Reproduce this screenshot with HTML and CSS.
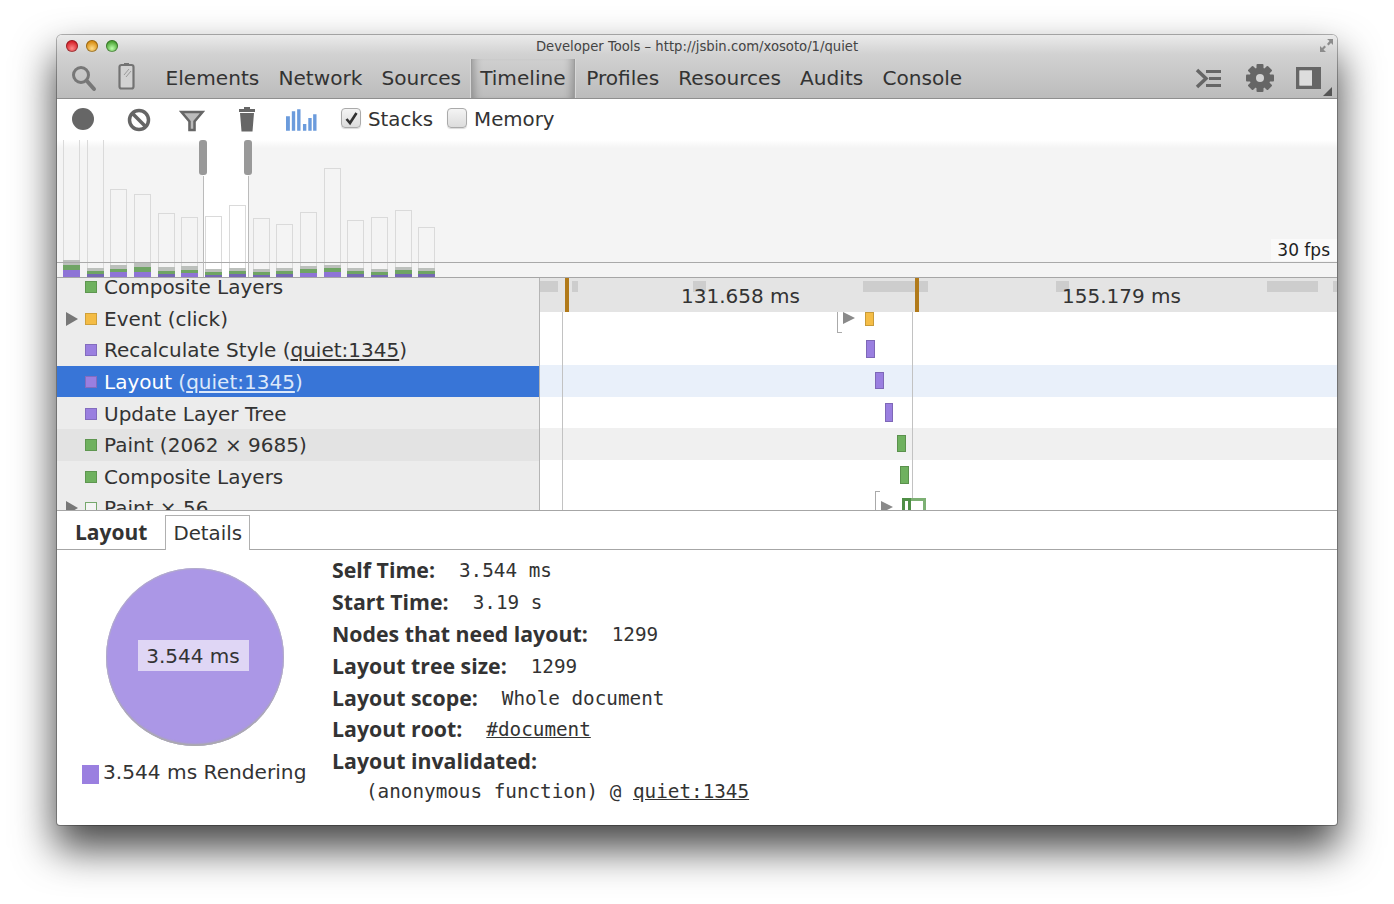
FILE: index.html
```html
<!DOCTYPE html>
<html lang="en">
<head>
<meta charset="utf-8">
<title>Developer Tools</title>
<link rel="stylesheet" href="styles.css">
</head>
<body>
<div class="window">
  <header class="chrome">
    <div class="titlebar">
      <div class="lights"><i class="light red"></i><i class="light yellow"></i><i class="light green"></i></div>
      <div class="title">Developer Tools – http://jsbin.com/xosoto/1/quiet</div>
      <svg class="expand" width="15" height="15" viewBox="0 0 15 15"><path d="M8 1h6v6l-2-2-2.500 2.500-1.500-1.500L10.500 3zM7 14H1V8l2 2 2.500-2.500L7 9l-2.500 2.500z" fill="#8c8c8c"/></svg>
    </div>
    <div class="tabbar">
      <svg class="ic-search" width="26" height="28" viewBox="0 0 26 28"><circle cx="10" cy="11" r="7.500" fill="none" stroke="#777" stroke-width="3"/><path d="M15.500 16.500L23 25" stroke="#777" stroke-width="4" stroke-linecap="round"/></svg>
      <svg class="ic-device" width="17" height="27" viewBox="0 0 17 27"><rect x="1.500" y="2" width="14" height="23.500" rx="2" fill="#d2d2d2" stroke="#737373" stroke-width="2.200"/><path d="M6 1h5" stroke="#737373" stroke-width="2"/><path d="M6 12l5-6M8 14l5-6" stroke="#9a9a9a" stroke-width="1"/></svg>
      <nav class="nav">
        <span class="nav-item">Elements</span>
        <span class="nav-item">Network</span>
        <span class="nav-item">Sources</span>
        <span class="nav-item nav-active">Timeline</span>
        <span class="nav-item">Profiles</span>
        <span class="nav-item">Resources</span>
        <span class="nav-item">Audits</span>
        <span class="nav-item">Console</span>
      </nav>
      <div class="tools">
        <svg width="27" height="21" viewBox="0 0 27 21"><path d="M2 2l9 8.500-9 8.500" fill="none" stroke="#666" stroke-width="3.500"/><path d="M11 3.500h15M14 10.500h12M11 17.500h15" stroke="#666" stroke-width="3"/></svg>
        <svg width="28" height="28" viewBox="0 0 28 28">
          <g fill="#666">
            <circle cx="14" cy="14" r="10.500"/>
            <rect x="10.500" y="0" width="7" height="28" rx="1"/>
            <rect x="10.500" y="0" width="7" height="28" rx="1" transform="rotate(45 14 14)"/>
            <rect x="10.500" y="0" width="7" height="28" rx="1" transform="rotate(90 14 14)"/>
            <rect x="10.500" y="0" width="7" height="28" rx="1" transform="rotate(135 14 14)"/>
          </g>
          <circle cx="14" cy="14" r="4" fill="#d2d2d2"/>
        </svg>
        <svg class="ic-dock" width="25" height="22" viewBox="0 0 25 22"><path fill="#666" fill-rule="evenodd" d="M0 0h25v22H0zM3.500 3.500v15H16v-15z"/><path fill="#ddd" d="M3.500 3.500H16v15H3.500z"/></svg>
      </div>
      <i class="corner"></i>
    </div>
  </header>

  <div class="toolbar">
    <svg class="tb-record" width="22" height="22" viewBox="0 0 22 22"><circle cx="11" cy="11" r="11" fill="#666"/></svg>
    <svg class="tb-clear" width="24" height="24" viewBox="0 0 24 24"><circle cx="12" cy="12" r="9.500" fill="none" stroke="#666" stroke-width="3.500"/><path d="M5.500 5.500l13 13" stroke="#666" stroke-width="3.500"/></svg>
    <svg class="tb-filter" width="26" height="22" viewBox="0 0 26 22"><path d="M1 1h24l-8.500 10v10h-7V11z" fill="#bbb"/><path d="M2.500 2h21l-8 9.500v8.500h-5v-8.500z" fill="none" stroke="#666" stroke-width="2.500"/></svg>
    <svg class="tb-trash" width="16" height="25" viewBox="0 0 16 25"><path fill="#666" d="M5 0h6v2h5v3H0V2h5zM1 6h14l-1.500 18.500h-11z"/></svg>
    <svg class="tb-bars" width="31" height="23" viewBox="0 0 32 23"><path fill="#6b9bdc" d="M0 7h4v15H0zM6 2h3.500v20H6zM11.500 0H15v22h-3.500zM17.500 15H21v7h-3.500zM23 9h3.500v13H23zM28 5h3.500v17H28z"/></svg>
    <label class="check"><span class="box"><svg width="15" height="15" viewBox="0 0 15 15"><path d="M2.500 8l3.500 4 6.500-10" fill="none" stroke="#333" stroke-width="2.600"/></svg></span>Stacks</label>
    <label class="check"><span class="box"></span>Memory</label>
  </div>

  <section class="overview">
    <div class="ov-selection"></div>
    <div class="ov-bars">
      <div class="ov-bar ov-open" style="height:137px"><i class="sa" style="height:5px"></i><i class="sg" style="height:5px"></i><i class="sv sv-strong" style="height:7px"></i></div>
      <div class="ov-bar ov-open" style="height:137px"><i class="sa" style="height:3px"></i><i class="sg" style="height:3px"></i><i class="sv" style="height:3px"></i></div>
      <div class="ov-bar" style="height:88px"><i class="sa" style="height:4px"></i><i class="sg" style="height:3px"></i><i class="sv sv-strong" style="height:5px"></i></div>
      <div class="ov-bar" style="height:83px"><i class="sa" style="height:5px"></i><i class="sg" style="height:5px"></i><i class="sv sv-strong" style="height:5px"></i></div>
      <div class="ov-bar" style="height:64px"><i class="sa" style="height:4px"></i><i class="sg" style="height:3px"></i><i class="sv" style="height:3px"></i></div>
      <div class="ov-bar" style="height:60px"><i class="sa" style="height:4px"></i><i class="sg" style="height:3px"></i><i class="sv sv-strong" style="height:4px"></i></div>
      <div class="ov-bar" style="height:61px"><i class="sa" style="height:3px"></i><i class="sg" style="height:3px"></i><i class="sv" style="height:2px"></i></div>
      <div class="ov-bar" style="height:72px"><i class="sa" style="height:3px"></i><i class="sg" style="height:3px"></i><i class="sv" style="height:3px"></i></div>
      <div class="ov-bar" style="height:59px"><i class="sa" style="height:3px"></i><i class="sg" style="height:3px"></i><i class="sv" style="height:2px"></i></div>
      <div class="ov-bar" style="height:53px"><i class="sa" style="height:3px"></i><i class="sg" style="height:3px"></i><i class="sv" style="height:3px"></i></div>
      <div class="ov-bar" style="height:65px"><i class="sa" style="height:3px"></i><i class="sg" style="height:4px"></i><i class="sv sv-strong" style="height:4px"></i></div>
      <div class="ov-bar" style="height:109px"><i class="sa" style="height:3px"></i><i class="sg" style="height:4px"></i><i class="sv sv-strong" style="height:5px"></i></div>
      <div class="ov-bar" style="height:57px"><i class="sa" style="height:3px"></i><i class="sg" style="height:3px"></i><i class="sv" style="height:3px"></i></div>
      <div class="ov-bar" style="height:60px"><i class="sa" style="height:3px"></i><i class="sg" style="height:3px"></i><i class="sv" style="height:2px"></i></div>
      <div class="ov-bar" style="height:67px"><i class="sa" style="height:3px"></i><i class="sg" style="height:4px"></i><i class="sv" style="height:3px"></i></div>
      <div class="ov-bar" style="height:50px"><i class="sa" style="height:3px"></i><i class="sg" style="height:3px"></i><i class="sv" style="height:3px"></i></div>
    </div>
    <i class="ov-rule"></i>
    <i class="ov-handle ov-handle-l"></i>
    <i class="ov-handle ov-handle-r"></i>
    <i class="ov-line ov-line-l"></i>
    <i class="ov-line ov-line-r"></i>
    <span class="fps">30 fps</span>
  </section>

  <section class="main">
    <div class="list">
      <div class="list-inner">
        <div class="row"><i class="sw green"></i>Composite Layers</div>
        <div class="row"><i class="tri"></i><i class="sw yellow"></i>Event (click)</div>
        <div class="row"><i class="sw purple"></i>Recalculate Style (<u>quiet:1345</u>)</div>
        <div class="row selected"><i class="sw purple"></i>Layout <span class="link">(<u>quiet:1345</u>)</span></div>
        <div class="row"><i class="sw purple"></i>Update Layer Tree</div>
        <div class="row alt"><i class="sw green"></i>Paint (2062 × 9685)</div>
        <div class="row"><i class="sw green"></i>Composite Layers</div>
        <div class="row"><i class="tri"></i><i class="sw hollow"></i>Paint × 56</div>
      </div>
    </div>
    <div class="chart">
      <div class="ruler">
        <i class="rb" style="left:0;width:18px"></i>
        <i class="rb" style="left:32px;width:6px"></i>
        <i class="rb" style="left:153px;width:13px"></i>
        <i class="rb" style="left:323px;width:65px"></i>
        <i class="rb" style="left:516px;width:13px"></i>
        <i class="rb" style="left:727px;width:51px"></i>
        <i class="rb" style="left:793px;width:4px"></i>
        <i class="marker" style="left:25px"></i>
        <i class="marker" style="left:375px"></i>
        <span class="time" style="left:141px">131.658 ms</span>
        <span class="time" style="left:522px">155.179 ms</span>
      </div>
      <div class="tracks">
        <div class="track track-first"></div>
        <div class="track"></div>
        <div class="track track-sel"></div>
        <div class="track"></div>
        <div class="track track-alt"></div>
        <div class="track"></div>
        <div class="track"></div>
        <i class="grid" style="left:22px"></i>
        <i class="grid" style="left:372px"></i>
        <i class="bar yellow-b" style="left:325px;top:0;height:14px"></i>
        <i class="bar purple-b" style="left:326px;top:28px;height:18px"></i>
        <i class="bar purple-b" style="left:335px;top:60px;height:17px"></i>
        <i class="bar purple-b" style="left:345px;top:91px;height:19px;width:8px"></i>
        <i class="bar green-b" style="left:357px;top:123px;height:17px"></i>
        <i class="bar green-b" style="left:360px;top:154px;height:18px"></i>
        <i class="bar hollow-b" style="left:362px;top:186px;height:20px;width:24px"></i>
        <i class="bar hollow-b2" style="left:362px;top:186px;height:20px;width:9px"></i>
        <i class="play" style="left:303px;top:0"></i>
        <i class="play" style="left:341px;top:189px"></i>
        <i class="bracket" style="left:297px;top:0;height:21px"></i>
        <i class="bracket bracket-top" style="left:335px;top:179px;height:20px"></i>
      </div>
    </div>
  </section>

  <div class="tabs">
    <span class="tab tab-on">Layout</span>
    <span class="tab tab-box">Details</span>
  </div>

  <section class="details">
    <div class="pie-col">
      <div class="pie"><span class="pie-label">3.544 ms</span></div>
      <div class="legend"><i class="legend-sw"></i>3.544 ms Rendering</div>
    </div>
    <div class="info">
      <div class="info-row"><b>Self Time:</b><span class="val">3.544 ms</span></div>
      <div class="info-row"><b>Start Time:</b><span class="val">3.19 s</span></div>
      <div class="info-row"><b>Nodes that need layout:</b><span class="val">1299</span></div>
      <div class="info-row"><b>Layout tree size:</b><span class="val">1299</span></div>
      <div class="info-row"><b>Layout scope:</b><span class="val">Whole document</span></div>
      <div class="info-row"><b>Layout root:</b><span class="val"><u>#document</u></span></div>
      <div class="info-row"><b>Layout invalidated:</b></div>
      <div class="info-stack">(anonymous function) @ <u>quiet:1345</u></div>
    </div>
  </section>
</div>
</body>
</html>
```
FILE: styles.css
```css
html, body { margin: 0; padding: 0; background: #fff; }
body { height: 904px; overflow: hidden; font-family: "DejaVu Sans", sans-serif; color: #333; }
i { display: block; }

.window {
  width: 1280px;
  height: 790px;
  margin: 35px 0 0 57px;
  background: #fff;
  border-radius: 5px 5px 3px 3px;
  box-shadow: 0 22px 40px 2px rgba(0,0,0,.72), 0 0 0 1px rgba(0,0,0,.28);
  display: flex;
  flex-direction: column;
  overflow: hidden;
}

.chrome { height: 64px; background: linear-gradient(#ebebeb, #d2d2d2 30%, #bcbcbc); border-bottom: 1px solid #8f8f8f; flex: none; box-sizing: border-box; }
.titlebar { height: 24px; display: flex; align-items: center; position: relative; }
.lights { display: flex; gap: 8px; padding-left: 9px; position: absolute; left: 0; top: 5px; }
.light { width: 12px; height: 12px; border-radius: 50%; box-shadow: inset 0 0 0 1px rgba(0,0,0,.3); }
.red { background: radial-gradient(circle at 50% 70%, #f88, #d6232b 65%); }
.yellow { background: radial-gradient(circle at 50% 70%, #fd8, #d98f16 65%); }
.green { background: radial-gradient(circle at 50% 70%, #bfa, #4ba335 65%); }
.title { flex: 1; text-align: center; font-size: 13.200px; color: #444; margin-top: -1px; }
.expand { position: absolute; right: 3px; top: 3px; }

.tabbar { height: 39px; display: flex; align-items: center; position: relative; padding-left: 14px; }
.ic-search { margin-right: 21px; margin-top: -2px; }
.ic-device { margin-top: -4px; }
.nav { display: flex; margin-left: 21px; font-size: 20.100px; height: 39px; align-items: center; color: #333; }
.nav-item { padding: 0 9.600px; line-height: 39px; height: 39px; box-sizing: border-box; }
.nav-active { box-shadow: inset 9px 0 8px -7px rgba(0,0,0,.28), inset -9px 0 8px -7px rgba(0,0,0,.28), -1px 0 0 #d8d8d8, 1px 0 0 #d8d8d8; border-left: 1px solid #9c9c9c; border-right: 1px solid #9c9c9c; padding: 0 8px 0 8.500px; margin: 0 2px 0 0; }
.tools { position: absolute; right: 16px; top: 5px; display: flex; align-items: center; gap: 24px; }
.ic-dock { margin-left: -2px; }
.corner { position: absolute; right: 5px; bottom: 2px; width: 0; height: 0; border-style: solid; border-width: 0 0 9px 9px; border-color: transparent transparent #555 transparent; }

.toolbar { height: 41px; flex: none; background: #fff; display: flex; align-items: center; padding-left: 15px; box-sizing: border-box; font-size: 19.800px; line-height: 24px; }
.tb-record { margin-top: -1px; }
.tb-clear { margin-left: 33px; }
.tb-filter { margin-left: 28px; margin-top: 2px; }
.tb-trash { margin-left: 34px; }
.tb-bars { margin-left: 31px; margin-top: 2px; }
.check { display: flex; align-items: center; gap: 7px; }
.tb-bars + .check { margin-left: 24px; }
.check + .check { margin-left: 14px; }
.box { width: 18px; height: 18px; margin-top: -3px; border: 1px solid #aaa; border-radius: 4px; background: linear-gradient(#f4f4f4, #dcdcdc); display: flex; align-items: center; justify-content: center; box-shadow: 0 1px 1px rgba(0,0,0,.15); }

.overview { height: 138px; flex: none; position: relative; background: linear-gradient(#fff, #f4f4f4 8px); border-bottom: 1px solid #a6a6a6; box-sizing: border-box; }
.ov-selection { position: absolute; left: 146px; width: 45px; top: 0; bottom: 0; background: #fff; }
.ov-bars { position: absolute; left: 6px; bottom: 0; display: flex; align-items: flex-end; gap: 6.700px; }
.ov-bar { width: 17px; box-sizing: border-box; border: 1px solid #dadada; border-bottom: 0; display: flex; flex-direction: column; justify-content: flex-end; }
.ov-open { border-top: 0; }
.sa { background: #bcc0bc; margin: 0 -1px; }
.sg { background: #6fa464; margin: 0 -1px; }
.sv { background: #7668b4; margin: 0 -1px; }
.sv-strong { background: #8e74d6; }
.ov-rule { position: absolute; left: 0; right: 0; top: 122px; height: 1px; background: #a9a9a9; }
.ov-handle { position: absolute; top: 0; width: 8px; height: 35px; border-radius: 3px; background: #999; }
.ov-handle-l { left: 142px; }
.ov-handle-r { left: 187px; }
.ov-line { position: absolute; top: 36px; bottom: 0; width: 1px; background: #bbb; }
.ov-line-l { left: 146px; }
.ov-line-r { left: 191px; }
.fps { position: absolute; right: 7px; top: 99px; font-size: 17px; line-height: 22px; color: #222; background: #fafafa; padding-left: 6px; box-shadow: 7px 0 0 #fafafa; }

.main { height: 232px; flex: none; display: flex; overflow: hidden; border-bottom: 1px solid #a6a6a6; box-sizing: content-box; }
.list { width: 482px; background: #ececec; border-right: 1px solid #b5b5b5; overflow: hidden; flex: none; box-sizing: content-box; }
.list-inner { margin-top: -7px; }
.row { height: 31.600px; display: flex; align-items: center; padding: 1px 0 0 28px; box-sizing: border-box; font-size: 20px; white-space: pre; position: relative; color: #333; }
.row u { text-underline-offset: 2px; }
.alt { background: #e3e3e3; }
.selected { background: #3875d7; color: #fff; }
.link { color: #dce8fa; }
.sw { width: 12px; height: 12px; margin-right: 7px; box-sizing: border-box; border: 1px solid rgba(0,0,0,.15); }
.sw.green { background: #6fb15f; }
.sw.yellow { background: #f4bc45; }
.sw.purple { background: #9a7fe0; }
.sw.hollow { background: #f4f4f4; border: 1px solid #76a86c; }
.tri { position: absolute; left: 9px; top: 9px; width: 0; height: 0; border-style: solid; border-width: 7px 0 7px 12px; border-color: transparent transparent transparent #777; }

.chart { flex: 1; min-width: 0; position: relative; display: flex; flex-direction: column; }
.ruler { height: 34px; background: #e4e4e4; position: relative; flex: none; }
.rb { position: absolute; top: 3px; height: 11px; background: #cdcdcd; }
.marker { position: absolute; top: 0; bottom: 0; width: 4px; background: #b17a1a; }
.time { position: absolute; top: 3px; font-size: 20px; line-height: 30px; color: #333; }
.tracks { position: relative; flex: 1; overflow: hidden; background: #fff; }
.track { height: 31.600px; }
.track-first { height: 21.500px; }
.track-sel { background: #e9f0fa; }
.track-alt { background: #f0f0f0; }
.grid { position: absolute; top: 0; bottom: 0; width: 1px; background: #c2c2c2; }
.bar { position: absolute; width: 9px; box-sizing: border-box; border: 1px solid rgba(0,0,0,.18); }
.yellow-b { background: #f5bd46; }
.purple-b { background: #9a7fe0; }
.green-b { background: #6fb15f; }
.hollow-b { border: 3px solid #7db074; background: #fff; }
.hollow-b2 { border: 3px solid #4f8f46; background: #fff; }
.play { position: absolute; width: 0; height: 0; border-style: solid; border-width: 6px 0 6px 12px; border-color: transparent transparent transparent #8a8a8a; }
.bracket { position: absolute; width: 5px; box-sizing: border-box; border-left: 1px solid #aaa; border-bottom: 1px solid #aaa; }
.bracket-top { border-bottom: 0; border-top: 1px solid #aaa; }

.tabs { height: 38px; flex: none; display: flex; align-items: flex-end; padding-left: 18px; border-bottom: 1px solid #a6a6a6; background: #fff; box-sizing: content-box; font-size: 19.800px; }
.tab { height: 34px; line-height: 35px; box-sizing: border-box; color: #333; }
.tab-on { font-family: "Open Sans", sans-serif; font-weight: 700; font-size: 21px; padding: 0 18px 0 0; }
.tab-box { border: 1px solid #b0b0b0; border-bottom: 0; padding: 0 7px; height: 35px; margin-bottom: -1px; background: #fff; }

.details { flex: 1; display: flex; min-height: 0; }
.pie-col { width: 275px; flex: none; display: flex; flex-direction: column; padding-top: 18px; }
.pie { width: 178px; height: 178px; margin-left: 49px; border-radius: 50%; background: #ab97e6; box-shadow: inset 0 -3px 2px -1px #aaa, inset 0 0 1px 1px #b3aec7; display: flex; align-items: center; justify-content: center; }
.pie-label { background: #dfd6f5; height: 31px; line-height: 33px; width: 111px; text-align: center; font-size: 20px; margin-left: -4px; margin-top: -4px; color: #333; }
.legend { display: flex; align-items: center; margin: 14px 0 0 25px; font-size: 20.150px; white-space: nowrap; color: #333; }
.legend-sw { width: 17px; height: 19px; background: #9a7fe0; margin: 4px 4px 0 0; }
.info { padding-top: 5px; }
.info-row { height: 31.800px; display: flex; align-items: center; font-family: "DejaVu Sans Mono", monospace; font-size: 19.300px; white-space: pre; color: #333; }
.info-row b { font-family: "Open Sans", sans-serif; font-weight: 700; font-size: 21.300px; margin: -2px 24px 0 0; }
.info-stack { font-family: "DejaVu Sans Mono", monospace; font-size: 19.300px; white-space: pre; padding-left: 34px; line-height: 28px; color: #333; }
```
